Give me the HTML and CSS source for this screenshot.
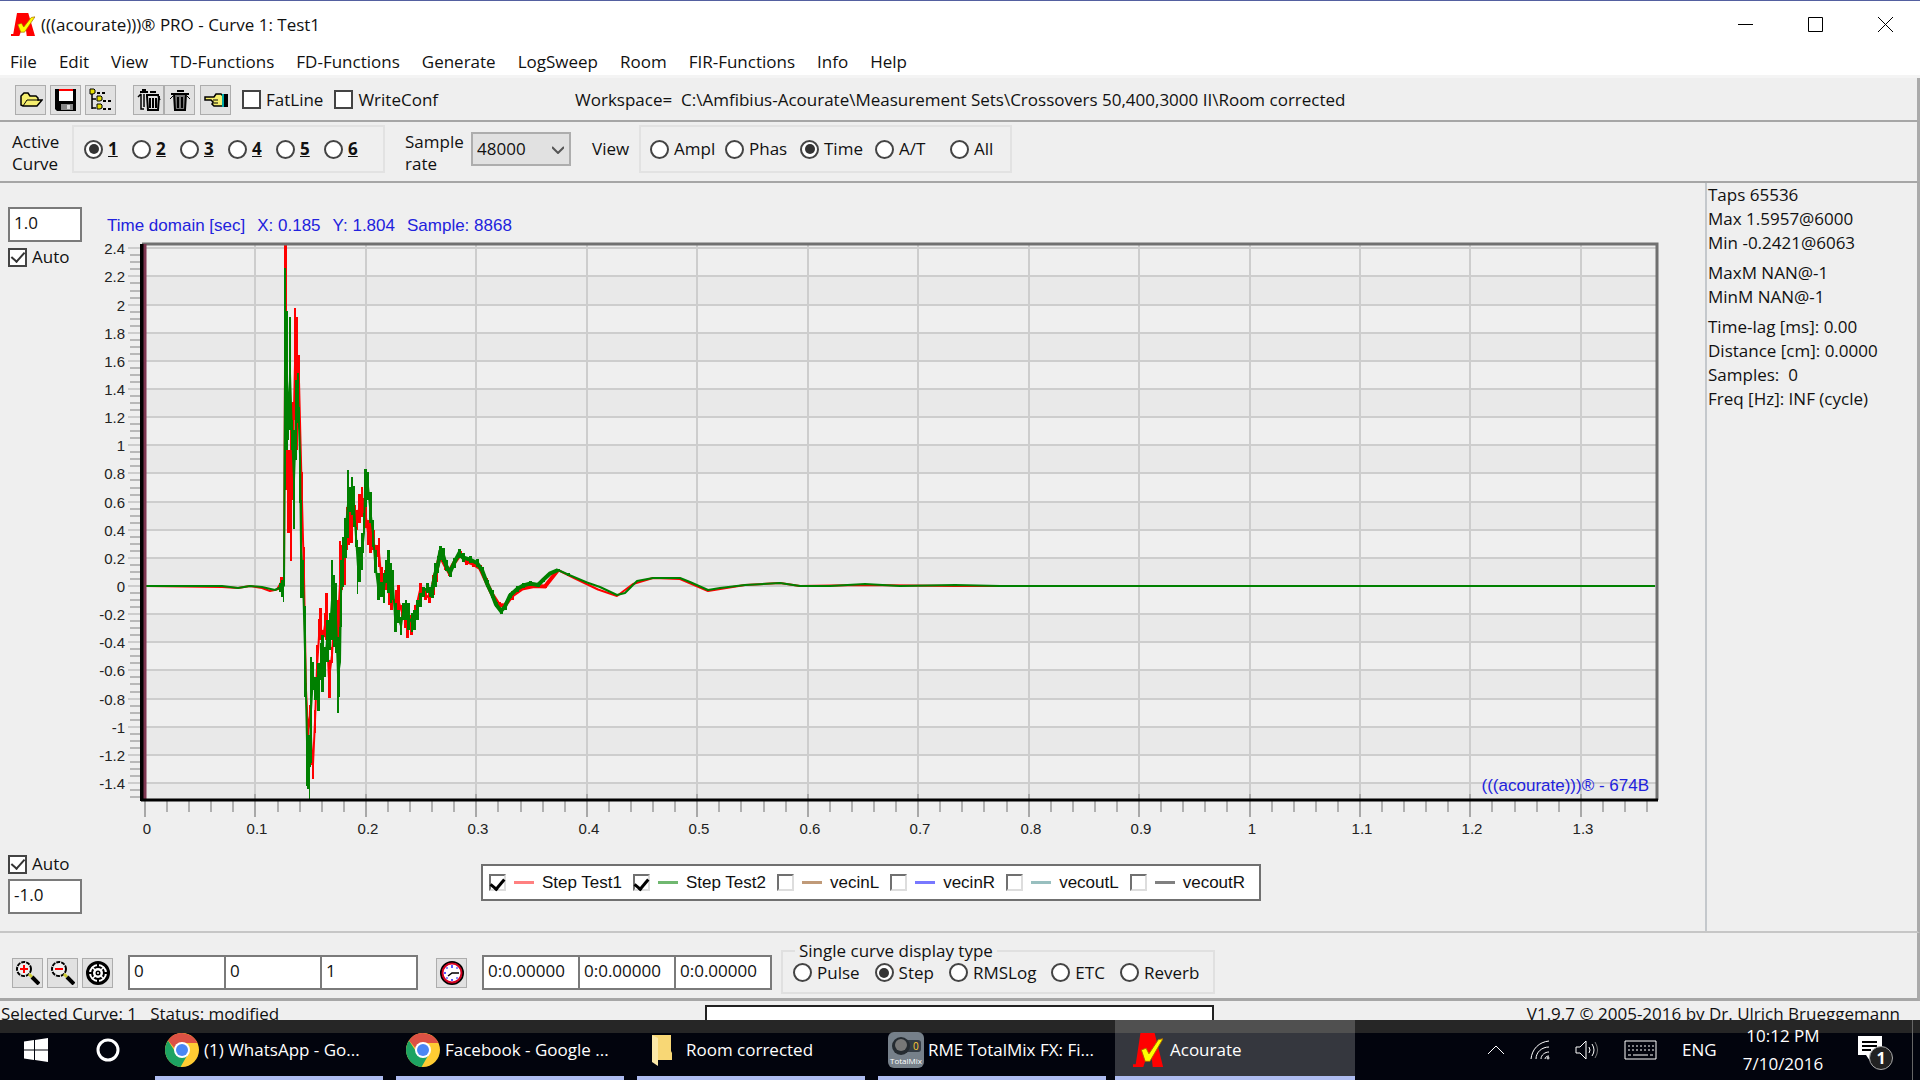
FILE: index.html
```html
<!DOCTYPE html>
<html lang="en">
<head>
  <meta charset="UTF-8" />
  <meta name="viewport" content="width=device-width, initial-scale=1.0"/>
  <title>(((acourate)))® PRO - Curve 1: Test1</title>
  <link rel="stylesheet" href="styles.css">
</head>
<body>

  <!-- Shared symbols -->
  <svg class="symbols" aria-hidden="true">
    <symbol id="logo" viewBox="0 0 32 36" preserveAspectRatio="none">
      <path fill="#f00" d="M8 0h15l9 36H21l-1-9h-6l-3 9H0v-3h3z"/>
      <path fill="#ff0" stroke="#a60" stroke-width="1" d="M9 18l5-2 3 6L27 7l5-1-14 24h-5z"/>
    </symbol>
    <symbol id="chrome" viewBox="0 0 34 34">
      <circle cx="17" cy="17" r="17" fill="#fc3"/>
      <path fill="#1da362" d="M3 7.500A17 17 0 0 0 15.500 34L23 21l-12-1z"/>
      <path fill="#dd5144" d="M3 7.500A17 17 0 0 1 32.500 10H17l-6 7z"/>
      <circle cx="17" cy="17" r="8" fill="#fff"/>
      <circle cx="17" cy="17" r="6" fill="#4a87f4"/>
    </symbol>
  </svg>

  <header class="title-bar">
    <svg class="app-logo"><use href="#logo"/></svg>
    <h1>(((acourate)))® PRO - Curve 1: Test1</h1>
    <div class="window-buttons">
      <button aria-label="Minimize"><svg viewBox="0 0 15 15"><path d="M0 7.500h15"/></svg></button>
      <button aria-label="Maximize"><svg viewBox="0 0 15 15"><path d="M.5.5h14v14H.5z"/></svg></button>
      <button aria-label="Close"><svg viewBox="0 0 15 15"><path d="M0 0l15 15M15 0L0 15"/></svg></button>
    </div>
  </header>

  <nav class="menu-bar">
    <a href="#">File</a>
    <a href="#">Edit</a>
    <a href="#">View</a>
    <a href="#">TD-Functions</a>
    <a href="#">FD-Functions</a>
    <a href="#">Generate</a>
    <a href="#">LogSweep</a>
    <a href="#">Room</a>
    <a href="#">FIR-Functions</a>
    <a href="#">Info</a>
    <a href="#">Help</a>
  </nav>

  <div class="toolbar">
    <div class="tool-group spaced">
      <button class="tool" aria-label="Open">
        <svg viewBox="0 0 24 24"><path fill="#f5ee6e" stroke="#000" stroke-width="1.500" d="M2 17V8l3-3h4l2 3h6l2 2v2h4l-5 6H4z"/><path fill="none" stroke="#000" d="M4 18l4-6h12"/></svg>
      </button>
      <button class="tool" aria-label="Save">
        <svg viewBox="0 0 24 24"><path d="M1 1h21v22H3l-2-2z"/><path fill="#fff" d="M5 2h14v11H5z"/><path fill="#f00" d="M5 1h14v2H5z"/><path fill="#888" d="M7 16h12v6H7z"/><path fill="#ddd" d="M13 17h3v4h-3z"/></svg>
      </button>
      <button class="tool" aria-label="Tree">
        <svg viewBox="0 0 24 24"><path fill="none" stroke="#000" stroke-width="1.500" d="M3 5v16M3 11h4M3 20h4"/><path stroke="#000" stroke-width="2" stroke-dasharray="3 2" d="M8 5h10M14 13h9M14 21h9"/><g fill="#e6e000" stroke="#000"><path d="M1 1h4l1 1v3l-2 1H1zM8 8h4l1 1v3l-2 1H8zM8 16h4l1 1v3l-2 1H8z"/></g></svg>
      </button>
    </div>
    <div class="tool-group">
      <button class="tool" aria-label="Delete all">
        <svg viewBox="0 0 24 24"><path fill="none" stroke="#000" stroke-width="2" d="M3 4h8M5 2h4M9 7h13M13 4h6M10 8l1 14h10l1-14M13 10v10M16 10v10M19 10v10"/><path fill="none" stroke="#000" stroke-width="1.500" d="M1 9l3-3M4 6v15h3M7 6v13M23 12l-2-4"/></svg>
      </button>
      <button class="tool" aria-label="Delete">
        <svg viewBox="0 0 24 24"><path fill="#777" d="M6 6h12l-1 16H7z"/><path fill="none" stroke="#000" stroke-width="2" d="M3 6h18M9 3h7M6 6l1 16h10l1-16M10 9v11M14 9v11"/><path stroke="#000" d="M2 11l3-3M22 11l-3-3"/></svg>
      </button>
    </div>
    <button class="tool" aria-label="Pick">
      <svg viewBox="0 0 24 24"><path fill="#f5ee6e" stroke="#000" stroke-width="1.500" d="M1 9h9l2-3h5l2 2v10h-9l-2-2 1-2-2-2H1z"/><path stroke="#000" d="M9 12h5M9 15h5"/><path fill="#0aa" d="M18 6h2v13h-2z"/><path d="M20 6h4v13h-4z"/></svg>
    </button>
    <label class="check"><input type="checkbox">FatLine</label>
    <label class="check"><input type="checkbox">WriteConf</label>
    <p class="workspace">Workspace=&nbsp; C:\Amfibius-Acourate\Measurement Sets\Crossovers 50,400,3000 II\Room corrected</p>
  </div>

  <div class="options">
    <span class="caption curve-caption">Active Curve</span>
    <div class="group curve-group">
      <label class="radio"><input type="radio" name="curve" checked><u>1</u></label>
      <label class="radio"><input type="radio" name="curve"><u>2</u></label>
      <label class="radio"><input type="radio" name="curve"><u>3</u></label>
      <label class="radio"><input type="radio" name="curve"><u>4</u></label>
      <label class="radio"><input type="radio" name="curve"><u>5</u></label>
      <label class="radio"><input type="radio" name="curve"><u>6</u></label>
    </div>
    <label class="caption rate-caption" for="rate">Sample rate</label>
    <div class="select-wrap">
      <select id="rate"><option>48000</option><option>44100</option><option>96000</option></select>
      <svg viewBox="0 0 12 8"><path d="M0 1l6 6 6-6"/></svg>
    </div>
    <span class="view-caption">View</span>
    <div class="group view-group">
      <label class="radio"><input type="radio" name="view">Ampl</label>
      <label class="radio"><input type="radio" name="view">Phas</label>
      <label class="radio"><input type="radio" name="view" checked>Time</label>
      <label class="radio"><input type="radio" name="view">A/T</label>
      <label class="radio"><input type="radio" name="view">All</label>
    </div>
  </div>

  <main>
    <section class="chart-pane">
      <div class="limits">
        <div>
          <input class="field" type="text" value="1.0" aria-label="Upper limit">
          <label class="check"><input type="checkbox" checked>Auto</label>
        </div>
        <div>
          <label class="check"><input type="checkbox" checked>Auto</label>
          <input class="field" type="text" value="-1.0" aria-label="Lower limit">
        </div>
      </div>
      <div class="chart">
        <p class="readout"><span>Time domain [sec]</span><span>X: 0.185</span><span>Y: 1.804</span><span>Sample: 8868</span></p>
        <svg id="plot" viewBox="90 238 1600 607"></svg>
        <div class="legend">
          <label><input type="checkbox" checked><i class="red"></i>Step Test1</label>
          <label><input type="checkbox" checked><i class="green"></i>Step Test2</label>
          <label><input type="checkbox"><i class="brown"></i>vecinL</label>
          <label><input type="checkbox"><i class="blue"></i>vecinR</label>
          <label><input type="checkbox"><i class="teal"></i>vecoutL</label>
          <label><input type="checkbox"><i class="gray"></i>vecoutR</label>
        </div>
      </div>
    </section>
    <aside class="info">
      <p>Taps 65536<br>Max 1.5957@6000<br>Min -0.2421@6063</p>
      <p>MaxM NAN@-1<br>MinM NAN@-1</p>
      <p>Time-lag [ms]: 0.00<br>Distance [cm]: 0.0000<br>Samples:&nbsp; 0<br>Freq [Hz]: INF (cycle)</p>
    </aside>
  </main>

  <div class="bottom-bar">
    <div class="tool-group spaced">
      <button class="tool" aria-label="Zoom in">
        <svg viewBox="0 0 24 24"><circle cx="8" cy="8" r="7" fill="#eee" stroke="#000" stroke-width="2" stroke-dasharray="4 1"/><path stroke="#f00" stroke-width="2" d="M4 8h8M8 4v8"/><path stroke="#cc3" stroke-width="3" d="M13 13l3 3"/><path stroke="#000" stroke-width="4" d="M16 16l7 7"/></svg>
      </button>
      <button class="tool" aria-label="Zoom out">
        <svg viewBox="0 0 24 24"><circle cx="8" cy="8" r="7" fill="#eee" stroke="#000" stroke-width="2" stroke-dasharray="4 1"/><path stroke="#f00" stroke-width="2" d="M4 8h8"/><path stroke="#cc3" stroke-width="3" d="M13 13l3 3"/><path stroke="#000" stroke-width="4" d="M16 16l7 7"/></svg>
      </button>
      <button class="tool" aria-label="Fit">
        <svg viewBox="0 0 24 24"><circle cx="12" cy="12" r="10.500" fill="#fff" stroke="#000" stroke-width="3"/><circle cx="12" cy="12" r="6" fill="none" stroke="#000" stroke-width="2"/><path stroke="#000" stroke-width="2" d="M12 2v4M12 18v4M2 12h4M18 12h4"/><path stroke="#fff" stroke-width="1.500" d="M6 6l3 3M18 6l-3 3M6 18l3-3M18 18l-3-3"/><circle cx="12" cy="12" r="2.500"/><circle cx="12" cy="12" r="1" fill="#fff"/></svg>
      </button>
    </div>
    <div class="fields first">
      <input class="field" type="text" value="0" aria-label="Start">
      <input class="field" type="text" value="0" aria-label="Position">
      <input class="field" type="text" value="1" aria-label="End">
    </div>
    <button class="tool" aria-label="Time">
      <svg viewBox="0 0 24 24"><circle cx="12" cy="12" r="11" fill="#fff" stroke="#000" stroke-width="2"/><circle cx="12" cy="12" r="9.500" fill="none" stroke="#d00020" stroke-width="2"/><path stroke="#22f" stroke-width="1.500" d="M12 4v3M12 18v2M4 12h2M6.500 6.500l1 1M17.500 6.500l-1 1M6.500 17.500l1-1M17.500 17.500l-1-1"/><path fill="none" stroke="#000" stroke-width="1.500" d="M8 15l4-3h7"/></svg>
    </button>
    <div class="fields">
      <input class="field" type="text" value="0:0.00000" aria-label="Start time">
      <input class="field" type="text" value="0:0.00000" aria-label="Position time">
      <input class="field" type="text" value="0:0.00000" aria-label="End time">
    </div>
    <fieldset>
      <legend>Single curve display type</legend>
      <label class="radio"><input type="radio" name="type">Pulse</label>
      <label class="radio"><input type="radio" name="type" checked>Step</label>
      <label class="radio"><input type="radio" name="type">RMSLog</label>
      <label class="radio"><input type="radio" name="type">ETC</label>
      <label class="radio"><input type="radio" name="type">Reverb</label>
    </fieldset>
  </div>

  <div class="status-bar">
    <span>Selected Curve: 1 &nbsp; Status: modified</span>
    <div class="progress"></div>
    <span class="version">V1.9.7 © 2005-2016 by Dr. Ulrich Brueggemann</span>
  </div>

  <footer class="taskbar">
    <button class="start" aria-label="Start">
      <svg viewBox="0 0 24 24"><path fill="#fff" d="M0 3.500L10 2v9.500H0zM11 1.900L24 0v11.500H11zM0 12.500h10V22L0 20.500zM11 12.500h13V24l-13-1.900z"/></svg>
    </button>
    <button class="start" aria-label="Cortana">
      <svg viewBox="0 0 24 24"><circle cx="12" cy="12" r="10" fill="none" stroke="#fff" stroke-width="3"/></svg>
    </button>
    <div class="tasks">
      <button class="task"><svg viewBox="0 0 34 34"><use href="#chrome"/></svg>(1) WhatsApp - Go...</button>
      <button class="task"><svg viewBox="0 0 34 34"><use href="#chrome"/></svg>Facebook - Google ...</button>
      <button class="task folder"><svg viewBox="0 0 34 34"><path fill="#f8d775" d="M8 2h19v16l1 2v7H14z"/><path fill="#fce9a8" d="M8 2l6 3v28l-6-4z"/></svg>Room corrected</button>
      <button class="task mixer">
        <svg viewBox="0 0 36 36"><rect width="36" height="36" rx="6" fill="#76808a"/><rect x="12" y="8" width="21" height="12" rx="3" fill="#333b44"/><circle cx="13" cy="14" r="9" fill="#252b31"/><circle cx="13" cy="13" r="6" fill="#777"/><text x="25" y="18" font-size="10" fill="#fc3">0</text><text x="18" y="32" font-size="8" fill="#fff" text-anchor="middle">TotalMix</text></svg>RME TotalMix FX: Fi...</button>
      <button class="task active"><svg viewBox="0 0 32 36"><use href="#logo"/></svg>Acourate</button>
    </div>
    <div class="tray">
      <svg width="18" height="12" viewBox="0 0 18 12"><path d="M1 10l8-8 8 8"/></svg>
      <svg width="20" height="20" viewBox="0 0 20 20"><path d="M1 19C2 9 9 2 19 1M6 19c0-7 6-12 13-12M11 19c0-4 4-7 8-7M15 19c0-2 2-3 4-3"/><circle cx="18" cy="18" r="1"/></svg>
      <svg width="24" height="20" viewBox="0 0 24 20"><path d="M1 7h4l6-6v18l-6-6H1zM14 7q2 3 0 6M17 4q4 6 0 12"/><path stroke="#777" d="M20 2q5 8 0 16"/></svg>
      <svg width="33" height="20" viewBox="0 0 33 20"><path d="M1 1h31v18H1z"/><path stroke-dasharray="2 2" d="M4 6h26M4 10h26"/><path stroke-dasharray="3 2 15 2" d="M4 15h26"/></svg>
      <span class="lang">ENG</span>
      <div class="clock">10:12 PM<br>7/10/2016</div>
      <div class="notify">
        <svg width="24" height="28" viewBox="0 0 24 28"><path fill="#fff" stroke="none" d="M0 0h24v19h-8l-4 6-4-6H0z"/><path stroke="#000" stroke-width="2" d="M4 6h15M4 10h15M4 14h9"/></svg>
        <span class="badge">1</span>
      </div>
    </div>
  </footer>

  <script src="script.js"></script>
</body>
</html>
```
FILE: styles.css
```css
* {
  box-sizing: border-box;
  margin: 0;
  padding: 0;
}

body {
  display: flex;
  flex-direction: column;
  min-height: 100vh;
  background-color: #efefef;
  color: #111;
  font-family: "Open Sans", "Noto Sans", sans-serif;
  font-size: 17px;
  line-height: 22px;
}

button, input, select {
  font: inherit;
  color: inherit;
}

.symbols {
  display: none;
}

/* Title and menu */
.title-bar {
  display: flex;
  align-items: center;
  height: 48px;
  padding: 0 27px 0 11px;
  background-color: #fff;
  border-top: 1px solid #5460a0;
}

.app-logo {
  width: 24px;
  height: 23px;
  margin-right: 6px;
}

.title-bar h1 {
  font-size: 17px;
  font-weight: normal;
}

.window-buttons {
  display: flex;
  gap: 55px;
  margin-left: auto;
}

.window-buttons button {
  width: 15px;
  height: 15px;
  border: none;
  background: none;
}

.window-buttons svg {
  display: block;
  width: 15px;
  height: 15px;
  fill: none;
  stroke: #000;
}

.menu-bar {
  display: flex;
  gap: 22px;
  height: 30px;
  padding: 3px 10px 0;
  background-color: #fff;
  border-bottom: 3px solid #f4f4f4;
}

.menu-bar a {
  color: #111;
  text-decoration: none;
}

/* Toolbars */
.toolbar, .options, .bottom-bar {
  display: flex;
  align-items: center;
  border-right: 3px solid #aaa;
  border-bottom: 2px solid #a6a6a6;
}

.toolbar {
  height: 44px;
  padding: 1px 0 0 15px;
}

.tool-group {
  display: flex;
}

.spaced {
  gap: 4px;
}

.toolbar .tool-group {
  margin-right: 17px;
}

.toolbar .tool-group + .tool-group {
  margin-right: 5px;
}

.tool {
  display: flex;
  align-items: center;
  justify-content: center;
  width: 31px;
  height: 30px;
  background-color: #e1e1e1;
  border: 1px solid #adadad;
}

.tool svg {
  width: 24px;
  height: 24px;
}

.check, .radio {
  display: flex;
  align-items: center;
  gap: 5px;
}

.toolbar .check {
  margin-left: 11px;
}

.check input, .radio input {
  display: flex;
  align-items: center;
  justify-content: center;
  flex: none;
  width: 19px;
  height: 19px;
  appearance: none;
  background-color: #fff;
  border: 2px solid #444;
}

.check input:checked::after {
  content: "";
  width: 6px;
  height: 11px;
  margin-bottom: 3px;
  border: solid #333;
  border-width: 0 2px 2px 0;
  transform: rotate(42deg);
}

.radio input {
  border-radius: 50%;
}

.radio input:checked::after {
  content: "";
  width: 10px;
  height: 10px;
  border-radius: 50%;
  background-color: #333;
}

.workspace {
  margin-left: 137px;
  white-space: nowrap;
}

.options {
  height: 61px;
  padding-left: 12px;
}

.caption {
  padding-top: 3px;
}

.curve-caption {
  width: 60px;
}

.group {
  display: flex;
  height: 48px;
  margin-bottom: 5px;
  border: 2px solid #e2e2e2;
}

.curve-group {
  width: 313px;
  padding-left: 10px;
}

.curve-group .radio {
  width: 48px;
  font-weight: bold;
}

.rate-caption {
  width: 66px;
  margin-left: 20px;
}

.select-wrap {
  position: relative;
  margin-bottom: 5px;
}

.select-wrap select {
  width: 100px;
  height: 34px;
  padding-left: 4px;
  appearance: none;
  background-color: #e1e1e1;
  border: 2px solid #adadad;
}

.select-wrap svg {
  position: absolute;
  right: 7px;
  top: 14px;
  width: 12px;
  height: 8px;
  fill: none;
  stroke: #555;
  stroke-width: 2;
  pointer-events: none;
}

.view-caption {
  width: 47px;
  margin: 0 0 5px 21px;
}

.view-group {
  width: 373px;
  padding-left: 9px;
}

.view-group .radio {
  flex: none;
  width: 75px;
}

/* Chart */
main {
  display: flex;
  flex: 1;
  border-right: 3px solid #aaa;
  border-bottom: 2px solid #c6c6c6;
}

.chart-pane {
  display: flex;
  flex: 1;
  padding-right: 15px;
  border-right: 2px solid #c4c8cc;
}

.limits {
  display: flex;
  flex-direction: column;
  justify-content: space-between;
  width: 90px;
  padding: 24px 8px 17px;
}

.limits .check {
  margin: 4px 0;
}

.field {
  display: block;
  width: 74px;
  height: 35px;
  padding: 0 4px 4px;
  background-color: #fff;
  border: 2px solid #7a7a7a;
}

.chart {
  flex: 1;
  padding-top: 30px;
  font-family: "Liberation Sans", Arial, sans-serif;
}

.readout {
  display: flex;
  gap: 12px;
  height: 25px;
  padding-left: 17px;
  color: #2222dd;
  line-height: 25px;
}

#plot {
  display: block;
  width: 100%;
  font-size: 15px;
}

.legend {
  display: flex;
  gap: 11px;
  width: fit-content;
  height: 37px;
  margin: 19px auto 0;
  padding: 0 14px 0 6px;
  background-color: #fff;
  border: 2px solid #707070;
  transform: translateX(-19px);
}

.legend label {
  display: flex;
  align-items: center;
  gap: 8px;
}

.legend input {
  display: flex;
  justify-content: center;
  width: 17px;
  height: 17px;
  appearance: none;
  background-color: #fff;
  border: 2px solid #707070;
  border-right-color: #ddd;
  border-bottom-color: #ddd;
}

.legend input:checked::after {
  content: "";
  width: 6px;
  height: 11px;
  border: solid #000;
  border-width: 0 3px 3px 0;
  transform: rotate(40deg);
}

.legend i {
  width: 20px;
  height: 3px;
}

.red { background-color: #ff8080; }
.green { background-color: #70b870; }
.brown { background-color: #c09a78; }
.blue { background-color: #7878ff; }
.teal { background-color: #98bfbf; }
.gray { background-color: #808080; }

.info {
  width: 210px;
  padding-left: 1px;
  line-height: 24px;
  white-space: nowrap;
}

.info p {
  margin-bottom: 6px;
}

/* Bottom controls */
.bottom-bar {
  height: 68px;
  padding: 14px 0 0 12px;
  border-bottom-width: 3px;
}

.fields {
  display: flex;
  margin: 0 9px 0 15px;
}

.fields.first {
  margin: 0 18px 0 15px;
}

.fields .field {
  width: 98px;
}

.fields .field + .field {
  margin-left: -2px;
}

fieldset {
  display: flex;
  gap: 15px;
  width: 434px;
  height: 54px;
  margin-bottom: 12px;
  padding: 0 10px;
  border: 2px solid #e0e0e0;
}

fieldset legend {
  margin-left: 2px;
  padding: 0 4px;
}

fieldset .radio {
  height: 22px;
}

.status-bar {
  display: grid;
  grid-template-columns: 705px 509px 1fr;
  height: 19px;
  line-height: 25px;
}

.status-bar span {
  padding-left: 1px;
}

.progress {
  height: 15px;
  margin-top: 4px;
  background-color: #fff;
  border: 2px solid #222;
  border-bottom: none;
}

.status-bar .version {
  padding-right: 20px;
  text-align: right;
}

/* Taskbar */
.taskbar {
  display: flex;
  height: 60px;
  background: linear-gradient(#262626 13px, #02040d 13px);
  color: #fff;
}

.start {
  display: flex;
  justify-content: center;
  width: 72px;
  padding-top: 18px;
  background: none;
  border: none;
}

.start svg {
  width: 24px;
  height: 24px;
}

.tasks {
  display: flex;
  gap: 13px;
  margin-left: 11px;
}

.task {
  display: flex;
  align-items: center;
  gap: 5px;
  width: 228px;
  padding: 3px 0 0 10px;
  background: none;
  border: none;
  border-bottom: 4px solid #aebcf0;
  white-space: nowrap;
}

.task svg {
  width: 34px;
  height: 34px;
}

.task.active {
  width: 240px;
  padding-left: 16px;
  margin-left: -4px;
  background: linear-gradient(#505050 13px, #35373e 13px);
}

.task.folder {
  gap: 8px;
  padding-left: 7px;
}

.task.mixer svg {
  width: 36px;
  height: 36px;
}

.task.mixer {
  gap: 4px;
}

.tray {
  display: flex;
  align-items: center;
  margin-left: auto;
  padding-right: 7px;
  border-right: 1px solid #666;
  margin-right: 7px;
}

.tray svg {
  margin-right: 25px;
  fill: none;
  stroke: #fff;
  stroke-width: 1;
}

.lang {
  width: 59px;
}

.clock {
  width: 84px;
  line-height: 28px;
  text-align: center;
  white-space: nowrap;
}

.notify {
  position: relative;
  width: 47px;
  height: 28px;
  margin-left: 33px;
}

.badge {
  position: absolute;
  left: 11px;
  top: 10px;
  width: 24px;
  height: 24px;
  border: 1px solid #aaa;
  border-radius: 50%;
  background-color: #222;
  font-size: 16px;
  font-weight: bold;
  text-align: center;
}
```
FILE: script.js
```js
const plot = document.getElementById("plot");
const LEFT = 145, RIGHT = 1657, TOP = 244, BOTTOM = 800;
const xPos = sec => LEFT + sec * 1104.5;
const yPos = value => 586 - value * 140.7;

function add(name, attrs, text) {
  const el = document.createElementNS("http://www.w3.org/2000/svg", name);
  for (const key in attrs) el.setAttribute(key, attrs[key]);
  if (text !== undefined) el.textContent = text;
  plot.appendChild(el);
}

function line(d, stroke, width) {
  add("path", { d, stroke, "stroke-width": width, fill: "none" });
}

// bands, horizontal grid and scale
for (let i = 24; i >= -14; i -= 2) {
  const y = Math.round(yPos(i / 10));
  if ((24 - i) % 4 === 2) {
    add("rect", { x: LEFT, y, width: RIGHT - LEFT, height: Math.min(28, BOTTOM - y), fill: "#e9e9e9" });
  }
}
for (let i = 48; i >= -30; i--) {
  const y = Math.round(yPos(i / 20));
  if (i % 4) line(`M130 ${y}H141`, "#b8b8b8", 2);
}
for (let i = 24; i >= -14; i -= 2) {
  const y = Math.round(yPos(i / 10));
  line(`M128 ${y}H${RIGHT}`, "#cdcdcd", 2);
  add("text", { x: 125, y: y + 6, "text-anchor": "end", fill: "#222" }, String(i / 10));
}

// vertical grid and scale
for (let i = 0; i <= 68; i++) {
  const x = Math.round(xPos(i / 50));
  if (i % 5) {
    line(`M${x} ${BOTTOM}V812`, "#b0b0b0", 2);
  } else {
    line(`M${x} ${TOP}V817`, "#cdcdcd", 2);
    line(`M${x} 794V817`, "#a8a8a8", 2);
    add("text", { x: x + 2, y: 834, "text-anchor": "middle", fill: "#222" }, String(i / 50));
  }
}

// envelope of each step response: x, top, bottom
const red = [
  [145,586,586],[222,587,587],[238,588,588],[250,586,586],[262,588,588],[270,591,591],[277,589,590],[281,577,588],[284,572,590],
  [285,244,490],[288,450,533],[291,430,561],[293,402,500],[295,308,420],[297,317,450],[299,355,407],[301,422,500],[302,472,530],
  [304,547,606],[306,683,697],[308,724,735],[310,705,727],[312,750,765],[313,750,779],[315,710,733],[317,645,690],[319,619,653],
  [320,608,640],[323,630,647],[325,613,637],[326,593,640],[329,660,698],[332,647,663],[334,600,647],[338,600,640],[340,541,627],
  [342,545,590],[344,557,585],[347,507,550],[349,507,545],[351,510,543],[354,505,527],[357,510,530],[359,494,523],[362,487,517],
  [364,498,520],[366,507,528],[368,520,545],[370,522,553],[373,530,550],[376,545,557],[379,538,567],[381,567,583],[385,570,590],
  [389,583,605],[391,587,610],[396,590,612],[398,585,613],[402,605,620],[405,613,628],[407,617,638],[411,615,635],[415,605,620],
  [420,583,597],[425,588,600],[429,593,603],[433,575,595],[436,563,582],[440,550,560],[445,560,570],[449,568,576],[454,559,567],
  [460,551,558],[466,557,565],[473,560,567],[480,565,571],[486,578,584],[492,591,597],[499,602,608],[505,603,608],[512,591,600],
  [522,587,590],[534,585,587],[545,585,588],[558,569,571],[575,578,579],[598,589,590],[617,596,596],[633,584,584],[653,578,578],
  [680,579,579],[708,591,591],[745,585,585],[780,583,583],[800,586,586],[865,585,585],[955,586,586],[1655,586,586]
];
const green = [
  [145,586,586],[222,586,586],[238,588,588],[250,586,586],[262,587,587],[275,590,590],[280,583,592],[282,580,597],[284,569,602],
  [285,268,490],[287,311,450],[289,400,440],[290,317,430],[292,420,450],[294,430,529],[296,380,460],[298,373,423],[300,407,503],
  [301,500,598],[303,560,598],[305,606,697],[307,697,786],[308,735,789],[310,735,799],[311,657,763],[313,662,690],[315,677,700],
  [318,663,711],[321,643,680],[322,635,692],[325,647,677],[327,620,662],[330,613,650],[332,560,640],[334,575,647],[336,583,653],
  [338,637,713],[340,627,697],[341,560,627],[343,537,587],[345,518,558],[348,470,538],[350,487,512],[352,477,515],[354,486,527],
  [356,527,547],[358,540,594],[359,547,582],[362,533,570],[364,513,553],[365,469,507],[368,472,500],[370,492,523],[373,520,547],
  [375,550,573],[378,573,600],[381,582,597],[384,573,603],[386,560,583],[388,550,593],[391,563,603],[393,570,600],[395,603,632],
  [398,610,623],[401,617,635],[403,603,620],[406,600,620],[408,603,630],[412,613,632],[414,610,630],[417,600,620],[420,593,607],
  [423,587,597],[427,583,593],[430,587,597],[432,585,598],[435,563,587],[438,556,573],[440,546,560],[443,548,562],[446,560,571],
  [450,568,577],[454,558,568],[459,549,558],[463,553,562],[470,556,563],[477,559,567],[482,567,573],[487,580,587],[492,590,598],
  [496,602,607],[501,608,614],[505,603,610],[510,593,598],[517,586,592],[523,583,588],[530,581,586],[538,583,587],[543,578,582],
  [550,572,575],[558,569,571],[568,573,576],[587,582,583],[600,587,587],[617,595,595],[625,593,593],[637,581,581],[653,578,578],
  [680,578,578],[690,582,582],[708,590,590],[720,588,588],[745,585,585],[780,583,583],[800,586,586],[830,586,586],[865,584,584],
  [900,586,586],[955,585,585],[1000,586,586],[1655,586,586]
];

// one bar per sample column, joined by a line through the middles
function trace(rows, color) {
  rows.forEach(([x, top, bottom], i) => {
    const next = rows[i + 1];
    if (next && bottom > top) {
      add("rect", { x: x - 1, y: top, width: Math.min(next[0] - x, 3), height: bottom - top, fill: color });
    }
  });
  const points = rows.map(([x, top, bottom]) => `${x},${(top + bottom) / 2}`);
  add("polyline", {
    points: points.join(" "), stroke: color, "stroke-width": rows[0][1] ? 2 : 1,
    fill: "none", "stroke-linejoin": "bevel"
  });
  // thicker run through the decaying part
  const tail = rows.filter(([x]) => x > 430 && x < 560).map(([x, top, bottom]) => `${x},${(top + bottom) / 2}`);
  add("polyline", { points: tail.join(" "), stroke: color, "stroke-width": 4, fill: "none" });
}

trace(red, "#ff0000");
trace(green, "#008000");

// frame
line(`M142 ${TOP}H${RIGHT}V${BOTTOM}`, "#707070", 3);
line(`M142 ${TOP}V801`, "#000", 4);
line(`M145 ${TOP}V${BOTTOM}`, "#7d3550", 3);
line(`M141 ${BOTTOM}H${RIGHT + 1}`, "#000", 3);
add("text", { x: 1649, y: 791, "text-anchor": "end", "font-size": 17, fill: "#2222dd" }, "(((acourate)))® - 674B");
```
